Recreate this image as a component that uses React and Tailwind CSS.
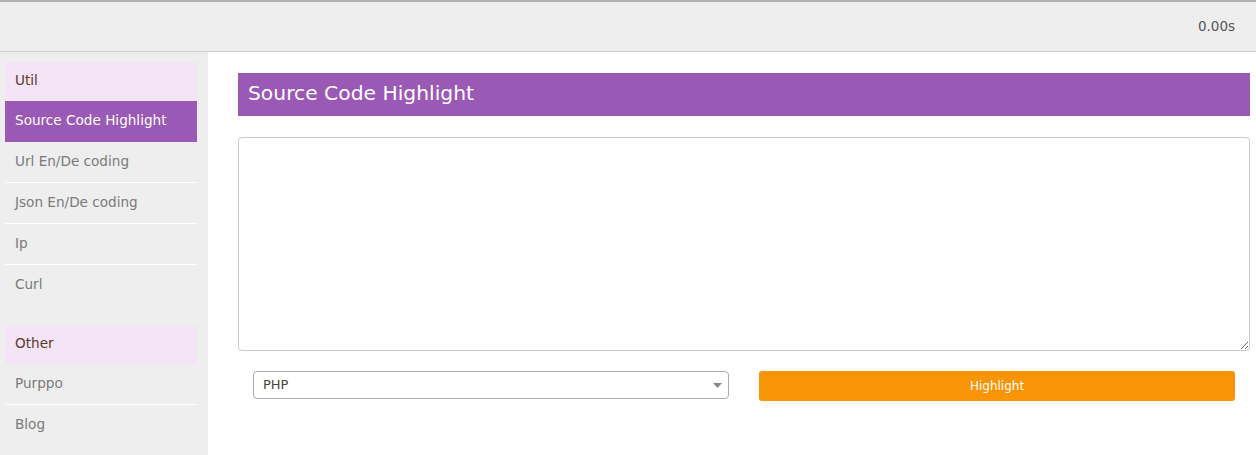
const font = { fontFamily: '"DejaVu Sans", Verdana, sans-serif' };

function NavItem({ label, active, last }) {
    if (active) {
        return (
            <div className="h-[41px] flex items-center px-[10px] pb-[2px] bg-[#9b59b6] text-white text-[13.6px]">
                {label}
            </div>
        );
    }
    return (
        <div className={`h-[41px] flex items-center px-[10px] pb-[2px] text-[13.6px] text-[#7a7a7a] ${last ? '' : 'border-b border-white'}`}>
            {label}
        </div>
    );
}

function Header({ label }) {
    return (
        <div className="h-[39px] flex items-center px-[10px] pb-[2px] bg-[#f3e5f5] text-[13.6px] text-[#5b3a29]">
            {label}
        </div>
    );
}

export default function App() {
    return (
        <div className="w-[1256px] h-[455px] overflow-hidden bg-white" style={font}>
            <div className="h-[52px] bg-[#eeeeee] border-t-2 border-[#b0b0b0] border-b border-b-[#cccccc] flex items-center justify-end pr-[21px]">
                <span className="text-[13.5px] text-[#555]">0.00s</span>
            </div>
            <div className="flex">
                <div className="w-[208px] h-[403px] bg-[#eeeeee] pt-[10px] px-[5px] pr-[11px]">
                    <Header label="Util" />
                    <NavItem label="Source Code Highlight" active />
                    <NavItem label="Url En/De coding" />
                    <NavItem label="Json En/De coding" />
                    <NavItem label="Ip" />
                    <NavItem label="Curl" last />
                    <div className="h-[19px]" />
                    <Header label="Other" />
                    <NavItem label="Purppo" />
                    <NavItem label="Blog" last />
                </div>
                <div className="flex-1 pl-[30px] pr-[6px] pt-[21px]">
                    <div className="h-[43px] bg-[#9b59b6] flex items-center px-[10px] pb-[3px] text-white text-[20.3px]">
                        Source Code Highlight
                    </div>
                    <textarea className="mt-[21px] w-full h-[214px] block border border-[#cccccc] rounded-[4px] resize-y outline-none p-2" />
                    <div className="mt-[20px] grid grid-cols-2 gap-[30px] px-[15px]">
                        <div className="relative h-[28px] border border-[#aaaaaa] rounded-[4px] flex items-center px-[9px] text-[13px] text-[#444]">
                            PHP
                            <svg className="absolute right-[6px] top-[11px]" width="9" height="5" viewBox="0 0 9 5">
                                <path d="M0 0 L9 0 L4.5 5 Z" fill="#888" />
                            </svg>
                        </div>
                        <button className="h-[30px] bg-[#f89406] rounded-[3px] text-white text-[12px] flex items-center justify-center">
                            Highlight
                        </button>
                    </div>
                </div>
            </div>
        </div>
    );
}
